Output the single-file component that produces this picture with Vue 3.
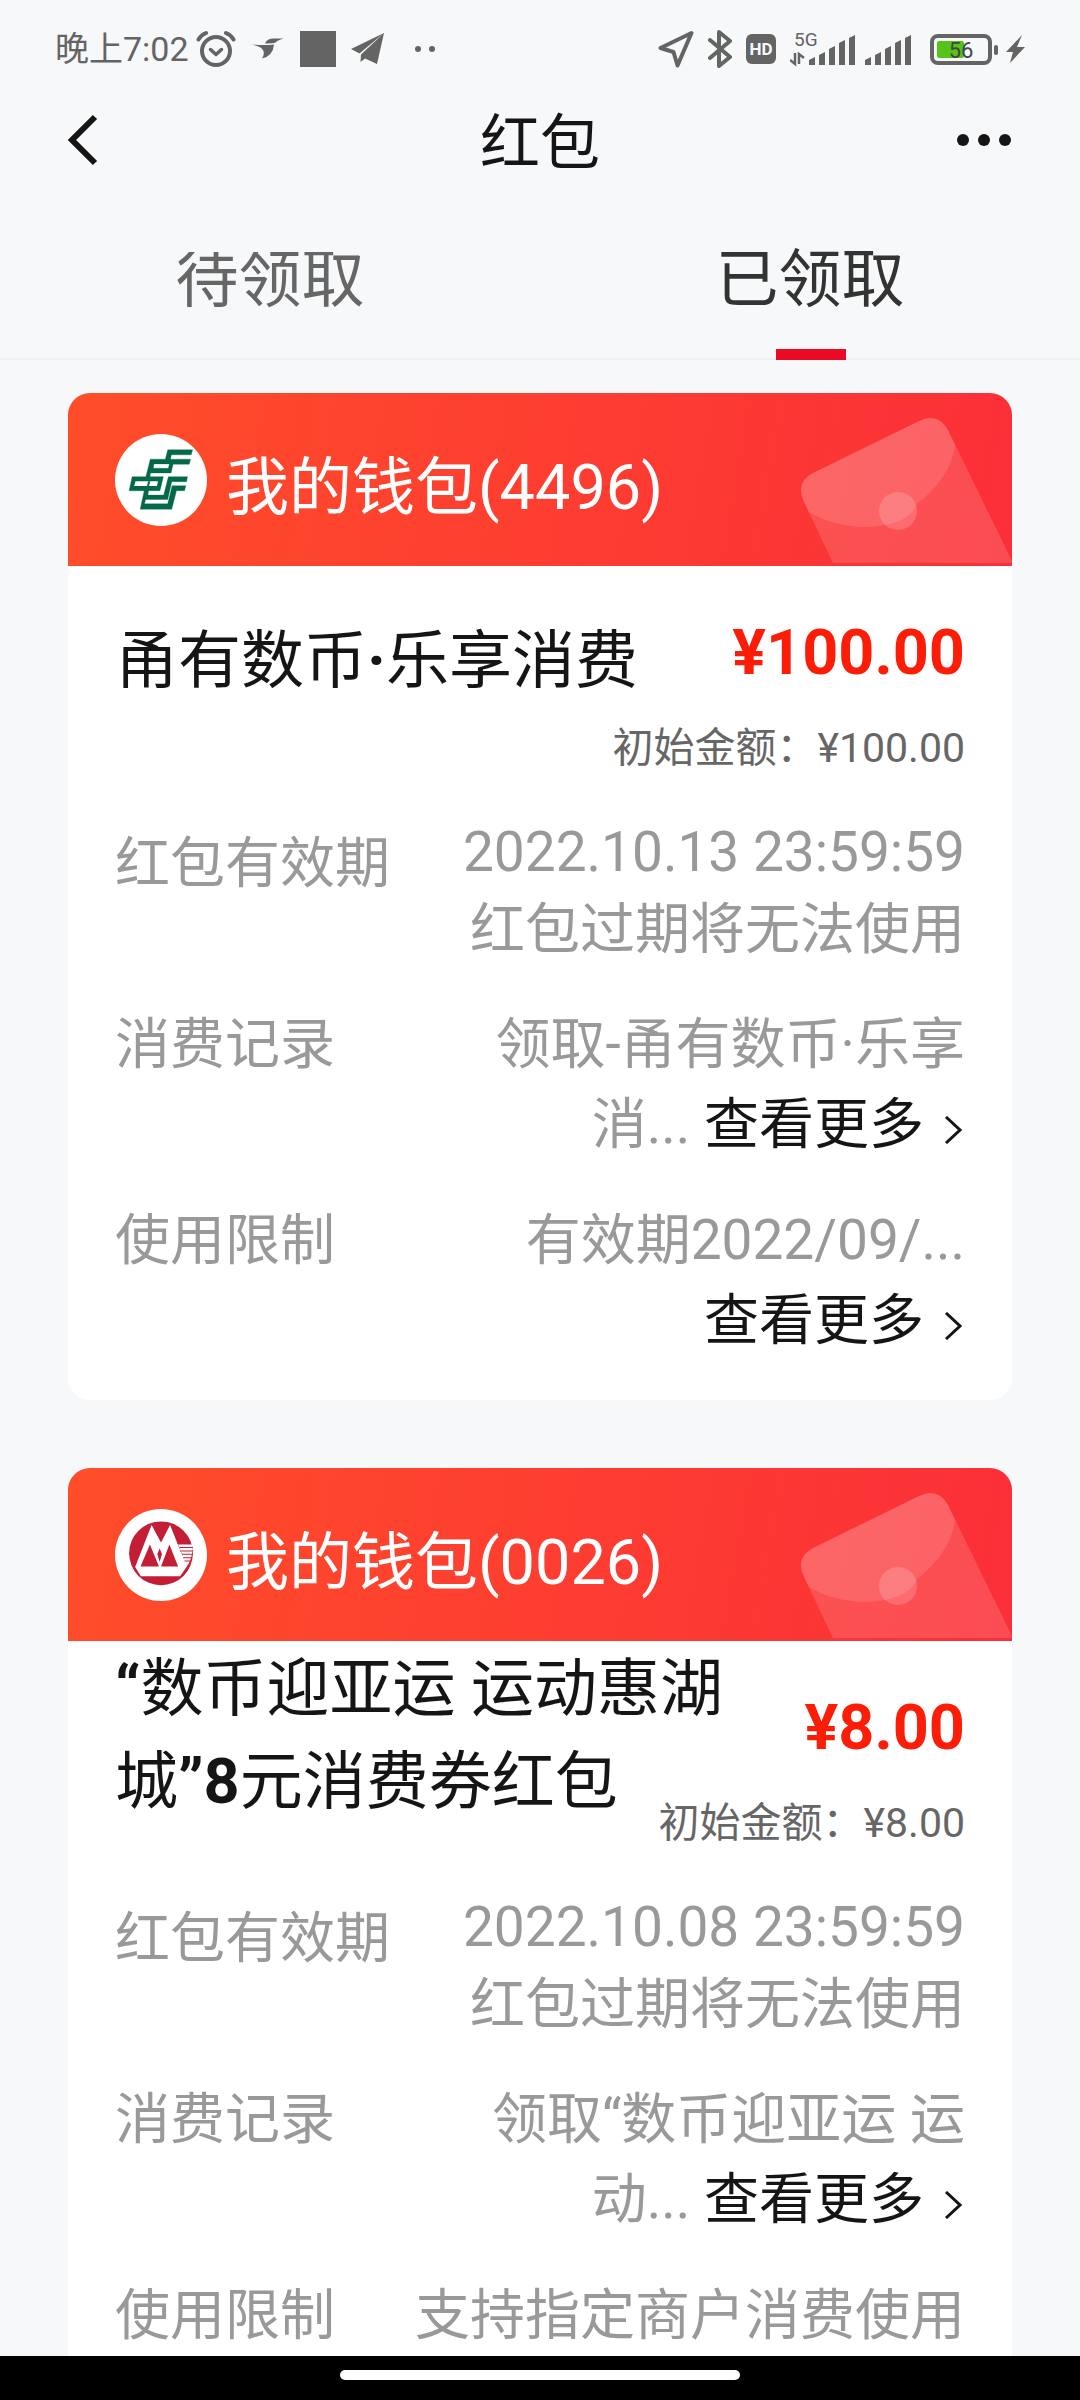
<template>
  <div class="page">
    <!-- 状态栏 -->
    <div class="status-bar">
      <div class="status-group">
        <span class="status-time">晚上7:02</span>
        <svg class="icon-alarm" viewBox="0 0 40 38" aria-hidden="true">
          <g fill="none" stroke="#646464" stroke-linecap="round" stroke-linejoin="round">
            <circle cx="20" cy="21" r="14" stroke-width="4" />
            <path d="M14.500 19.500l5.500 5 5.500-5" stroke-width="3.500" />
            <path d="M2.500 9.500Q5 5 10 3M37.500 9.500Q35 5 30 3" stroke-width="4" />
          </g>
        </svg>
        <svg class="icon-bird" viewBox="0 0 34 22" aria-hidden="true">
          <path d="M0 6.500Q14 7.500 23 6.500Q22 18 11 20.500Q14 16 12 12Q9 8 0 6.500ZM14 5.500Q16 0 24 .5L33 .5Q27 2 24.500 4.500Q23 5.500 14 5.500Z" fill="#646464" />
        </svg>
        <span class="status-square"></span>
        <svg class="icon-plane" viewBox="0 0 34 32" aria-hidden="true">
          <path d="M33 0L0 16L8.500 20.500ZM33 0L10 21.500L9.500 29L14 25.500L26 31Z" fill="#646464" />
        </svg>
        <svg class="icon-more-status" viewBox="0 0 36 8" aria-hidden="true">
          <circle cx="18" cy="4" r="3" fill="#646464" />
          <circle cx="32" cy="4" r="3" fill="#646464" />
        </svg>
      </div>
      <div class="status-group status-group-right">
        <svg class="icon-location" viewBox="0 0 36 38" aria-hidden="true">
          <path d="M33.500 3L2.500 18L15.500 22L19.500 35.500Z" fill="none" stroke="#646464" stroke-width="4" stroke-linejoin="round" />
        </svg>
        <svg class="icon-bluetooth" viewBox="0 0 24 38" aria-hidden="true">
          <path d="M2 10L22 27L11 36V2L22 11L2 28" fill="none" stroke="#646464" stroke-width="4" stroke-linecap="round" stroke-linejoin="round" />
        </svg>
        <span class="status-hd">HD</span>
        <svg class="icon-signal" viewBox="0 0 121 38" aria-hidden="true">
          <text x="4" y="16" font-size="19" fill="#646464">5G</text>
          <path d="M0 30l5 4V23M14 28l-5-4V34" fill="none" stroke="#646464" stroke-width="2.500" />
          <g v-for="x in [19, 75]" :key="x" :transform="`translate(${x} 0)`">
            <path v-for="(top, i) in [27, 22, 16, 10, 5]" :key="i" :d="`M${i * 10} 35V${top + 3}l6-3V35Z`" fill="#646464" />
          </g>
        </svg>
        <svg class="icon-battery" viewBox="0 0 100 38" aria-hidden="true">
          <rect x="7" y="6" width="58" height="27" rx="6" fill="none" stroke="#646464" stroke-width="4" />
          <rect x="12" y="11" width="27" height="17" rx="2" fill="#55c417" />
          <rect x="69" y="15" width="4" height="10" rx="2" fill="#646464" />
          <text x="36" y="28" font-size="22" text-anchor="middle" fill="#444">56</text>
          <path d="M97 5L81 22H88L85 33L100 17H92Z" fill="#646464" />
        </svg>
      </div>
    </div>

    <!-- 标题栏 -->
    <header class="title-bar">
      <button class="title-btn" type="button" aria-label="返回">
        <svg class="icon-back" viewBox="0 0 32 52" aria-hidden="true">
          <path d="M27 3L4 26L27 49" fill="none" stroke="#151515" stroke-width="6" />
        </svg>
      </button>
      <h1 class="title-text">红包</h1>
      <button class="title-btn" type="button" aria-label="更多">
        <svg class="icon-more" viewBox="0 0 56 14" aria-hidden="true">
          <circle cx="7" cy="7" r="6" fill="#151515" />
          <circle cx="28" cy="7" r="6" fill="#151515" />
          <circle cx="49" cy="7" r="6" fill="#151515" />
        </svg>
      </button>
    </header>

    <!-- 标签页 -->
    <nav class="tabs">
      <button
        v-for="tab in tabs"
        :key="tab"
        class="tab"
        :class="{ active: tab === activeTab }"
        type="button"
        @click="activeTab = tab"
      >
        <span class="tab-text">{{ tab }}</span>
      </button>
    </nav>

    <!-- 红包列表 -->
    <main class="list">
      <article v-for="item in packets" :key="item.wallet" class="card">
        <div class="card-header">
          <svg v-if="item.bank === 'psbc'" class="bank-logo" viewBox="46 42 274 274" aria-hidden="true">
            <circle cx="183" cy="179" r="137" fill="#fff" />
            <g fill="#04694a" stroke="#04694a" stroke-width="1">
              <path d="M203 89H277L273 104H214L208 131H162L160 144H205L211 117H271L267 132H219L213 158H152L150 169H190L180 211H146L144 224H191L205 169H262L259 184H215L203 237H137L134 250H203L216 196H257L253 211H229L215 266H121L133 211H88L97 169H138L151 117H196Z" />
            </g>
            <path d="M107 183H174L171 197H103Z" fill="#fff" />
            <path d="M148 183L144 197" fill="none" stroke="#04694a" stroke-width="6" />
          </svg>
          <svg v-else class="bank-logo" viewBox="46 32 274 274" aria-hidden="true">
            <circle cx="183" cy="169" r="137" fill="#fff" />
            <circle cx="183" cy="164" r="95" fill="#c41e36" />
            <path d="M155 80L183 132L210 80L242 160L262 200L240 232H123L106 205Z" fill="#fff" />
            <path d="M150 138L122 203H177ZM208 138L183 203H234ZM179 150L172 166L179 190L186 166Z" fill="#c41e36" />
            <path d="M234 138H276Q280 168 264 198H258Z" fill="#fff" />
            <path d="M238 147H278M241 157H279M245 167H278M249 177H275M253 187H271" stroke="#c41e36" stroke-width="3" />
          </svg>
          <h2 class="wallet-name">我的钱包({{ item.wallet }})</h2>
          <svg class="envelope" viewBox="0 0 220 173" aria-hidden="true">
            <g fill="#fff">
              <path d="M41 170L12 109Q3 89 21 80L127 28Q146 19 156 37L220 168V170Z" fill-opacity=".14" />
              <path d="M17 119L12 109Q3 89 21 80L127 28Q146 19 156 37L163 52Q159 84 125 111Q116 134 68 134Q38 132 17 119Z" fill-opacity=".12" />
              <circle cx="106" cy="118" r="19" fill-opacity=".17" />
            </g>
          </svg>
        </div>

        <div class="card-body">
          <div class="summary">
            <h3 class="packet-name">
              <template v-for="(part, i) in item.name" :key="i">
                <b v-if="part.bold">{{ part.text }}</b>
                <template v-else>{{ part.text }}</template>
              </template>
            </h3>
            <strong class="amount">¥{{ item.amount }}</strong>
          </div>
          <p class="origin-amount">初始金额：¥{{ item.amount }}</p>

          <dl class="details">
            <div v-for="row in item.rows" :key="row.label" class="row" :class="{ 'row-date': row.date }">
              <dt class="row-label">{{ row.label }}</dt>
              <dd class="row-value">
                <span v-for="line in row.lines" :key="line" class="row-line">{{ line }}</span>
                <span v-if="row.more" class="row-line">
                  {{ row.tail }}
                  <button class="more-btn" type="button">
                    查看更多<svg class="icon-arrow" viewBox="0 0 41 28" aria-hidden="true">
                      <path d="M22 1L36 14L22 27" fill="none" stroke="#151515" stroke-width="3" />
                    </svg>
                  </button>
                </span>
              </dd>
            </div>
          </dl>
        </div>
      </article>
    </main>

    <div class="home-bar"><span class="home-indicator"></span></div>
  </div>
</template>

<script setup>
import { ref } from 'vue';

const tabs = ['待领取', '已领取'];
const activeTab = ref('已领取');

const packets = [
  {
    bank: 'psbc',
    wallet: '4496',
    name: [{ text: '甬有数币' }, { text: '·', bold: true }, { text: '乐享消费' }],
    amount: '100.00',
    rows: [
      { label: '红包有效期', date: true, lines: ['2022.10.13 23:59:59', '红包过期将无法使用'] },
      { label: '消费记录', lines: ['领取-甬有数币·乐享'], tail: '消...', more: true },
      { label: '使用限制', lines: ['有效期2022/09/...'], more: true }
    ]
  },
  {
    bank: 'cmb',
    wallet: '0026',
    name: [
      { text: '“', bold: true },
      { text: '数币迎亚运 运动惠湖城' },
      { text: '”8', bold: true },
      { text: '元消费券红包' }
    ],
    amount: '8.00',
    rows: [
      { label: '红包有效期', date: true, lines: ['2022.10.08 23:59:59', '红包过期将无法使用'] },
      { label: '消费记录', lines: ['领取“数币迎亚运 运'], tail: '动...', more: true },
      { label: '使用限制', lines: ['支持指定商户消费使用'] }
    ]
  }
];
</script>

<style>
body {
  margin: 0;
  background-color: #f7f8fa;
}
</style>

<style scoped>
.page {
  display: flex;
  flex-direction: column;
  height: 100vh;
  overflow: hidden;
  font-family: Roboto, "Noto Sans CJK SC", sans-serif;
  color: #151515;
  background-color: #f7f8fa;
}

h1,
h2,
h3,
p,
dl,
dd {
  margin: 0;
  font-weight: 400;
}

button {
  padding: 0;
  border: none;
  background: none;
  font-family: inherit;
  color: inherit;
  cursor: pointer;
}

svg {
  display: block;
  flex: none;
}

/* 状态栏 */
.status-bar {
  display: flex;
  justify-content: space-between;
  flex: none;
  height: 98px;
  padding: 0 55px;
  color: #646464;
}

.status-group {
  display: flex;
  align-items: center;
  gap: 15px;
}

.status-group-right {
  gap: 14px;
}

.status-time {
  font-size: 34px;
  line-height: 40px;
  margin-right: -8px;
}

.status-square {
  width: 36px;
  height: 36px;
  background-color: #646464;
}

.status-hd {
  width: 30px;
  height: 30px;
  border-radius: 6px;
  background-color: #646464;
  color: #f7f8fa;
  font-size: 17px;
  font-weight: 700;
  line-height: 30px;
  text-align: center;
}

.icon-alarm {
  width: 40px;
  height: 38px;
}

.icon-bird {
  width: 34px;
  height: 22px;
}

.icon-plane {
  width: 34px;
  height: 32px;
}

.icon-more-status {
  width: 36px;
  height: 8px;
}

.icon-location {
  width: 36px;
  height: 38px;
}

.icon-bluetooth {
  width: 24px;
  height: 38px;
}

.icon-signal {
  width: 121px;
  height: 38px;
}

.icon-battery {
  width: 100px;
  height: 38px;
}

/* 标题栏 */
.title-bar {
  display: flex;
  align-items: center;
  justify-content: space-between;
  flex: none;
  height: 84px;
  padding: 0 68px;
}

.title-btn {
  display: flex;
  width: 56px;
}

.icon-back {
  width: 32px;
  height: 52px;
}

.icon-more {
  width: 56px;
  height: 14px;
}

.title-text {
  padding-top: 8px;
  font-size: 60px;
  line-height: 76px;
}

/* 标签页 */
.tabs {
  display: flex;
  flex: none;
  height: 176px;
  border-bottom: 2px solid #eeeff1;
}

.tab {
  position: relative;
  display: flex;
  align-items: flex-start;
  justify-content: center;
  flex: 1;
  padding-top: 70px;
  font-size: 63px;
  color: #666;
}

.tab-text {
  line-height: 56px;
  overflow: hidden;
}

.tab.active {
  color: #333;
}

.tab.active .tab-text {
  overflow: visible;
}

.tab.active::after {
  content: "";
  position: absolute;
  left: 50%;
  bottom: -2px;
  width: 70px;
  height: 11px;
  margin-left: -34px;
  background-color: #ea0a24;
}

/* 红包卡片 */
.list {
  flex: 1;
  min-height: 0;
  padding: 33px 68px 0;
  overflow: hidden;
}

.card {
  margin-bottom: 68px;
  border-radius: 22px;
  background-color: #fff;
  overflow: hidden;
}

.card-header {
  position: relative;
  display: flex;
  align-items: center;
  height: 173px;
  padding: 0 47px;
  background: linear-gradient(100deg, #ff4d29, #fb2f38);
  color: #fff;
}

.bank-logo {
  width: 92px;
  height: 92px;
}

.wallet-name {
  margin-left: 19px;
  padding-top: 16px;
  font-size: 63px;
  line-height: 84px;
}

.envelope {
  position: absolute;
  right: 0;
  bottom: 0;
  width: 220px;
  height: 173px;
}

.card-body {
  padding: 0 47px 40px;
}

.summary {
  display: flex;
  align-items: center;
  justify-content: space-between;
  gap: 32px;
  min-height: 188px;
}

.packet-name {
  font-size: 63px;
  line-height: 93px;
}

.amount {
  flex: none;
  padding-bottom: 14px;
  font-size: 63px;
  font-weight: 700;
  line-height: 84px;
  color: #fb1d07;
}

.origin-amount {
  margin-top: -31px;
  font-size: 41px;
  line-height: 50px;
  text-align: right;
  color: #666;
}

.details {
  display: flex;
  flex-direction: column;
  gap: 36px;
  margin-top: 41px;
  font-size: 55px;
  line-height: 80px;
  color: #999;
}

.row {
  display: flex;
  justify-content: space-between;
}

.row-label {
  flex: none;
}

.row-value {
  text-align: right;
}

.row-line {
  display: block;
}

.row-date .row-label {
  padding-top: 9px;
}

.row-date .row-line {
  line-height: 77px;
}

.more-btn {
  font-size: 55px;
  line-height: 80px;
  color: #151515;
}

.icon-arrow {
  display: inline-block;
  width: 41px;
  height: 28px;
  vertical-align: -1px;
}

/* 底部手势条 */
.home-bar {
  display: flex;
  align-items: center;
  justify-content: center;
  flex: none;
  height: 44px;
  background-color: #000;
}

.home-indicator {
  width: 37%;
  height: 10px;
  margin-bottom: 6px;
  border-radius: 5px;
  background-color: #fff;
}
</style>
